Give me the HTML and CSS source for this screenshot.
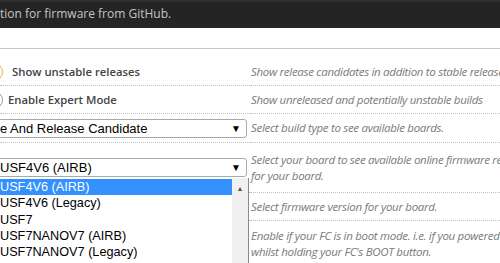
FILE: index.html
```html
<!DOCTYPE html>
<html lang="en">
<head>
    <meta charset="UTF-8">
    <meta name="viewport" content="width=device-width, initial-scale=1.0">
    <title>Firmware Flasher</title>
    <link rel="stylesheet" href="styles.css">
</head>
<body>
    <div class="topbar">tion for firmware from GitHub.</div>
    <div class="gap"></div>

    <div class="options">
        <div class="cell left row-a">
            <span class="toggle on"></span>
            <span class="label first">Show unstable releases</span>
        </div>
        <div class="cell right row-a">Show release candidates in addition to stable releases.</div>

        <div class="cell left row-b">
            <span class="toggle off"></span>
            <span class="label">Enable Expert Mode</span>
        </div>
        <div class="cell right row-b">Show unreleased and potentially unstable builds</div>

        <div class="cell left row-c">
            <div class="select">
                <span>e And Release Candidate</span>
                <span class="arrow">&#9660;</span>
            </div>
        </div>
        <div class="cell right row-c">Select build type to see available boards.</div>

        <div class="cell left row-d">
            <div class="select">
                <span>USF4V6 (AIRB)</span>
                <span class="arrow">&#9660;</span>
            </div>
        </div>
        <div class="cell right row-d">Select your board to see available online firmware releases<br>for your board.</div>

        <div class="cell left row-e"></div>
        <div class="cell right row-e">Select firmware version for your board.</div>

        <div class="cell left row-f"></div>
        <div class="cell right row-f">Enable if your FC is in boot mode. i.e. if you powered it<br>whilst holding your FC's BOOT button.</div>
    </div>

    <div class="dropdown">
        <ul class="items">
            <li class="selected">USF4V6 (AIRB)</li>
            <li>USF4V6 (Legacy)</li>
            <li>USF7</li>
            <li>USF7NANOV7 (AIRB)</li>
            <li>USF7NANOV7 (Legacy)</li>
        </ul>
        <div class="scrollbar"><span class="up">&#9650;</span></div>
    </div>
</body>
</html>
```

FILE: styles.css
```css
body {
    margin: 0;
    font-family: "Open Sans", sans-serif;
    background: #fff;
    overflow: hidden;
    width: 500px;
    height: 263px;
}
.topbar {
    height: 26px;
    border-top: 2px solid #2e2e2e;
    background-color: #242424;
    color: #c4c4c4;
    font-size: 12px;
    line-height: 24px;
    white-space: nowrap;
}
.gap {
    height: 20px;
    border-bottom: 1px solid #c8c8c8;
}
.options {
    display: grid;
    grid-template-columns: 250px 250px;
    grid-template-rows: 28px 28px 29px 50px 28px 42px;
    margin-top: 9px;
}
.cell {
    box-sizing: border-box;
    border-bottom: 1px dotted #c2c2c2;
    display: flex;
    align-items: center;
    white-space: nowrap;
    overflow: hidden;
}
.right {
    padding-left: 1px;
    font-size: 11.5px;
    letter-spacing: -0.3px;
    font-style: italic;
    line-height: 16px;
    color: #7a7a7a;
}
.row-f {
    align-items: flex-start;
    padding-top: 7px;
    border-bottom: none;
}
.toggle {
    width: 16px;
    height: 16px;
    border-radius: 50%;
    margin-left: -15px;
    background: #fff;
    flex-shrink: 0;
}
.toggle.on {
    border: 1px solid #e8b530;
}
.toggle.off {
    border: 1px solid #9a9a9a;
}
.label {
    font-size: 11.3px;
    font-weight: 600;
    color: #444;
    margin-left: 5px;
}
.label.first {
    margin-left: 9px;
}
.select {
    box-sizing: border-box;
    margin-left: -4px;
    width: 251px;
    height: 19px;
    border: 1px solid #a9a9a9;
    border-radius: 3px;
    display: flex;
    align-items: center;
    justify-content: space-between;
    padding: 0 5px 0 3px;
    font-family: "Liberation Sans", Arial, sans-serif;
    font-size: 13px;
    color: #000;
}
.arrow {
    font-size: 10px;
}
.dropdown {
    position: absolute;
    top: 178px;
    left: 0;
    width: 248px;
    height: 85px;
    display: flex;
    background: #fff;
    border-right: 1px solid #8a8a8a;
}
.items {
    list-style: none;
    margin: 0;
    padding: 1px 0 0 0;
    flex: 1;
    font-family: "Liberation Sans", Arial, sans-serif;
    font-size: 12.7px;
    line-height: 16.3px;
    color: #000;
}
.items .selected {
    background-color: #3390ff;
    color: #fff;
}
.scrollbar {
    width: 16px;
    background: #f0f0f0;
    display: flex;
    justify-content: center;
}
.up {
    font-size: 7px;
    color: #505050;
    margin-top: 6px;
}
```
